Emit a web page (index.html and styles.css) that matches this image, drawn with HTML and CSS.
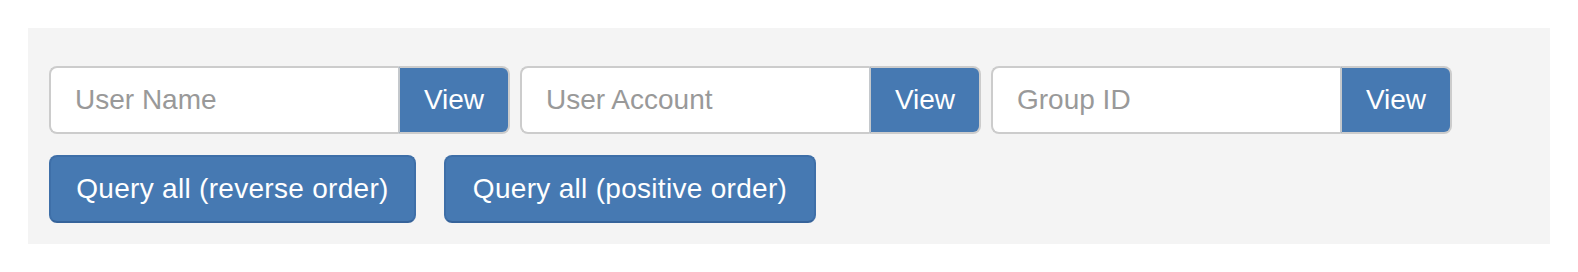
FILE: index.html
```html
<!DOCTYPE html>
<html>
<head>
<meta charset="utf-8">
<link rel="stylesheet" href="styles.css">
</head>
<body>
<div class="panel">
  <div class="search-row">
    <div class="input-group">
      <input class="field" type="text" placeholder="User Name">
      <span class="addon">View</span>
    </div>
    <div class="input-group">
      <input class="field" type="text" placeholder="User Account">
      <span class="addon">View</span>
    </div>
    <div class="input-group">
      <input class="field" type="text" placeholder="Group ID">
      <span class="addon">View</span>
    </div>
  </div>
  <div class="action-row">
    <button class="btn btn-reverse">Query all (reverse order)</button>
    <button class="btn btn-positive">Query all (positive order)</button>
  </div>
</div>
</body>
</html>
```

FILE: styles.css
```css
html, body {
  margin: 0;
  padding: 0;
  background: #ffffff;
}
body {
  font-family: "Liberation Sans", Arial, sans-serif;
}
.panel {
  margin: 28px 0 0 28px;
  width: 1522px;
  height: 216px;
  box-sizing: border-box;
  background: #f4f4f4;
  padding: 38px 21px 0 21px;
  display: flex;
  flex-direction: column;
  gap: 21px;
}
.search-row {
  display: flex;
  gap: 10px;
}
.input-group {
  display: flex;
  width: 461px;
  height: 68px;
}
.field {
  flex: 1;
  min-width: 0;
  box-sizing: border-box;
  height: 68px;
  border: 2px solid #cccccc;
  border-right: none;
  border-radius: 8px 0 0 8px;
  background: #ffffff;
  padding: 0 24px;
  font-family: "Liberation Sans", Arial, sans-serif;
  font-size: 28px;
  color: #555;
  outline: none;
}
.field::placeholder {
  color: #999999;
}
.addon {
  width: 112px;
  box-sizing: border-box;
  height: 68px;
  display: flex;
  align-items: center;
  justify-content: center;
  background: #4679b2;
  color: #ffffff;
  font-size: 28px;
  border: 2px solid #cccccc;
  border-left: 2px solid #c4c8cc;
  border-radius: 0 8px 8px 0;
}
.action-row {
  display: flex;
  gap: 28px;
}
.btn {
  height: 68px;
  box-sizing: border-box;
  padding: 0;
  background: #4679b2;
  color: #ffffff;
  border: 2px solid #3e6fa8;
  border-bottom-color: #36639a;
  border-radius: 8px;
  font-family: "Liberation Sans", Arial, sans-serif;
  font-size: 28px;
  letter-spacing: 0.3px;
  text-align: center;
  cursor: pointer;
}
.btn-reverse {
  width: 367px;
}
.btn-positive {
  width: 372px;
}
```
